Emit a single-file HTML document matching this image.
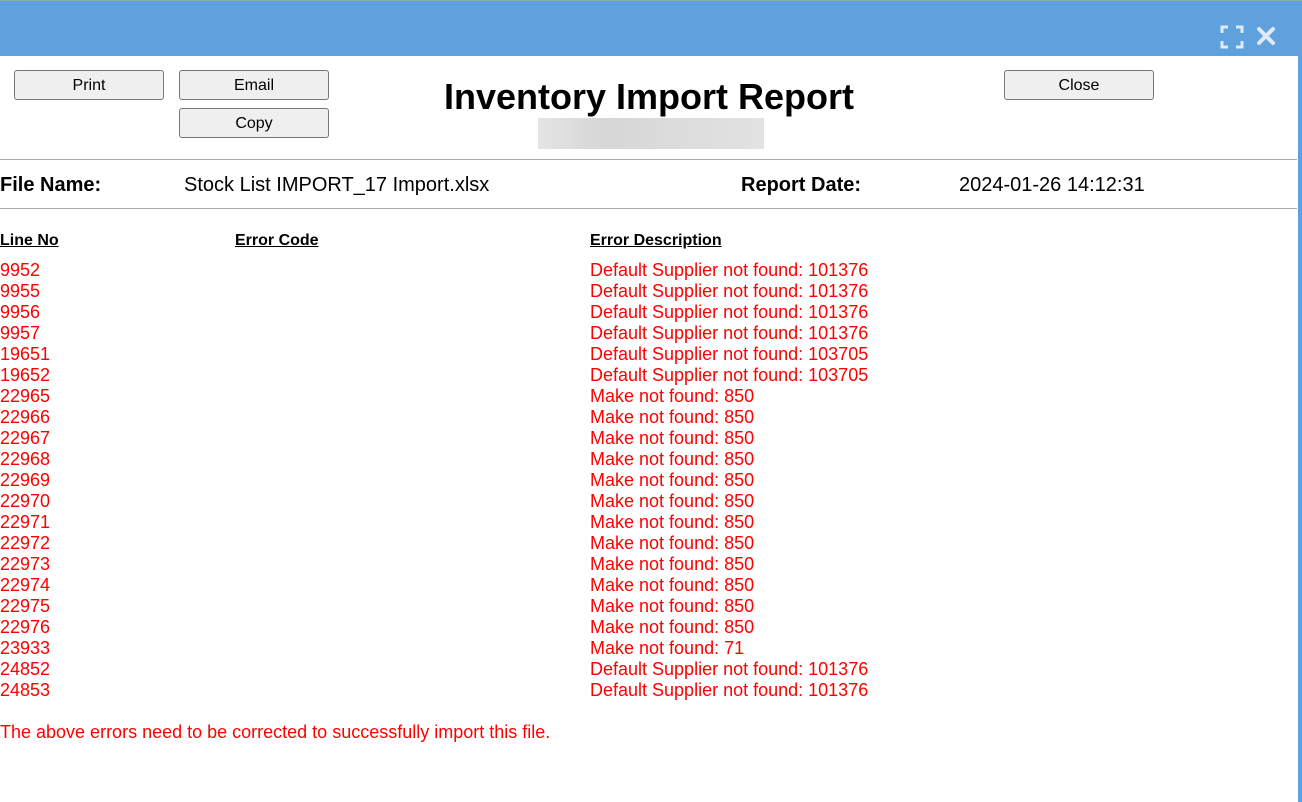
<!DOCTYPE html>
<html><head><style>
body{margin:0;width:1302px;height:802px;overflow:hidden;background:#fff;font-family:"Liberation Sans",Arial,sans-serif;position:relative}
.top{position:absolute;left:0;top:0;width:1302px;height:55px;background:#5fa1dc;border-top:1px solid #8aa}
.rb{position:absolute;left:1298px;top:55px;width:4px;height:747px;background:#5fa1dc}
.btn{position:absolute;border:1px solid #777;border-radius:3px;background:#efefef;font-size:16px;text-align:center;line-height:29px;color:#000;box-sizing:border-box;width:150px;height:30px}
.t{position:absolute;font-size:36px;font-weight:bold;left:0;width:1298px;text-align:center;top:76px}
.blur{position:absolute;left:538px;top:118px;width:226px;height:31px;background:linear-gradient(90deg,#e4e4e4,#d6d6d6 30%,#dcdcdc 60%,#e2e2e2)}
.hr{position:absolute;left:0;width:1297px;height:1px;background:#aaa}
.a{position:absolute;font-size:20px;top:174px}
.h{position:absolute;top:232px;font-size:16px;font-weight:bold;text-decoration:underline}
.col{position:absolute;top:260px;font-size:18px;line-height:21px;color:#f00;white-space:pre}
</style></head><body>
<div class="top">
<svg style="position:absolute;left:1220px;top:24px" width="24" height="24" viewBox="0 0 24 24" fill="none" stroke="#dfeaf6" stroke-width="3"><path d="M2 8V2H8M16 2H22V8M22 16V22H16M8 22H2V16"/></svg>
<svg style="position:absolute;left:1256px;top:25px" width="20" height="20" viewBox="0 0 20 20" stroke="#dfeaf6" stroke-width="4" stroke-linecap="round"><path d="M3 3L17 17M17 3L3 17"/></svg>
</div>
<div class="rb"></div>
<div class="btn" style="left:14px;top:70px">Print</div>
<div class="btn" style="left:179px;top:70px">Email</div>
<div class="btn" style="left:179px;top:108px">Copy</div>
<div class="btn" style="left:1004px;top:70px">Close</div>
<div class="t">Inventory Import Report</div>
<div class="blur"></div>
<div class="hr" style="top:159px"></div>
<div class="hr" style="top:208px"></div>
<div class="a" style="left:0;font-weight:bold">File Name:</div>
<div class="a" style="left:184px">Stock List IMPORT_17 Import.xlsx</div>
<div class="a" style="left:741px;font-weight:bold">Report Date:</div>
<div class="a" style="left:959px">2024-01-26 14:12:31</div>
<div class="h" style="left:0">Line No</div>
<div class="h" style="left:235px">Error Code</div>
<div class="h" style="left:590px">Error Description</div>
<div class="col" style="left:0">9952
9955
9956
9957
19651
19652
22965
22966
22967
22968
22969
22970
22971
22972
22973
22974
22975
22976
23933
24852
24853</div>
<div class="col" style="left:590px">Default Supplier not found: 101376
Default Supplier not found: 101376
Default Supplier not found: 101376
Default Supplier not found: 101376
Default Supplier not found: 103705
Default Supplier not found: 103705
Make not found: 850
Make not found: 850
Make not found: 850
Make not found: 850
Make not found: 850
Make not found: 850
Make not found: 850
Make not found: 850
Make not found: 850
Make not found: 850
Make not found: 850
Make not found: 850
Make not found: 71
Default Supplier not found: 101376
Default Supplier not found: 101376</div>
<div class="col" style="top:722px;left:0">The above errors need to be corrected to successfully import this file.</div>
</body></html>
